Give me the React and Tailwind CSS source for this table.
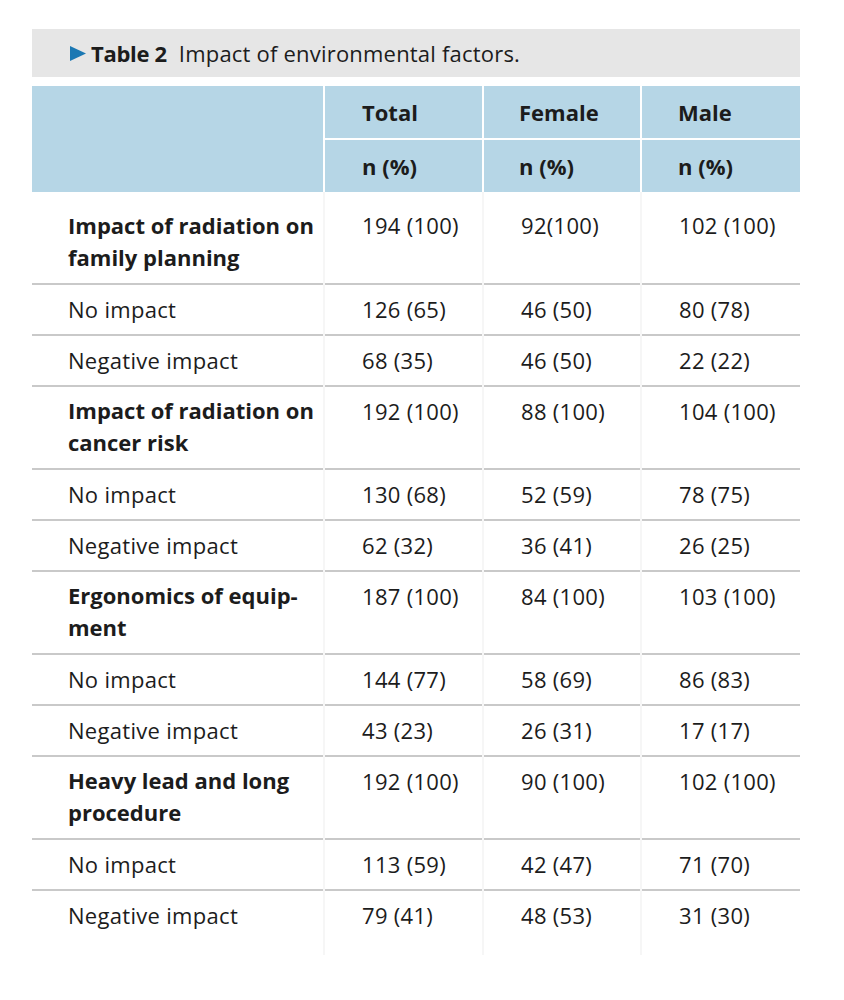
import React from "react";

const groups = [
  {
    title: ["Impact of radiation on", "family planning"],
    vals: ["194 (100)", "92(100)", "102 (100)"],
    rows: [
      ["No impact", "126 (65)", "46 (50)", "80 (78)"],
      ["Negative impact", "68 (35)", "46 (50)", "22 (22)"],
    ],
  },
  {
    title: ["Impact of radiation on", "cancer risk"],
    vals: ["192 (100)", "88 (100)", "104 (100)"],
    rows: [
      ["No impact", "130 (68)", "52 (59)", "78 (75)"],
      ["Negative impact", "62 (32)", "36 (41)", "26 (25)"],
    ],
  },
  {
    title: ["Ergonomics of equip-", "ment"],
    vals: ["187 (100)", "84 (100)", "103 (100)"],
    rows: [
      ["No impact", "144 (77)", "58 (69)", "86 (83)"],
      ["Negative impact", "43 (23)", "26 (31)", "17 (17)"],
    ],
  },
  {
    title: ["Heavy lead and long", "procedure"],
    vals: ["192 (100)", "90 (100)", "102 (100)"],
    rows: [
      ["No impact", "113 (59)", "42 (47)", "71 (70)"],
      ["Negative impact", "79 (41)", "48 (53)", "31 (30)"],
    ],
  },
];

function Cell({ children, bold, first, border, extraTop, lastRow }) {
  const pt = extraTop ? "pt-[17px]" : bold ? "pt-[7px]" : "pt-[8px]";
  const pb = lastRow ? "pb-[24px]" : bold ? "pb-[10px]" : "pb-[9px]";
  return (
    <div
      className={`bg-white ${first ? "pl-[36px]" : "pl-[37px]"} ${pt} ${pb} ${
        border ? "border-b-2 border-[#c9c9c9]" : ""
      } ${bold ? "font-bold tracking-[0px]" : "tracking-[0.3px]"}`}
    >
      {children}
    </div>
  );
}

export default function App() {
  const bodyRows = [];
  groups.forEach((g, gi) => {
    bodyRows.push({ bold: true, cells: [g.title, ...g.vals], first: gi === 0 });
    g.rows.forEach((r, ri) =>
      bodyRows.push({
        bold: false,
        cells: r,
        last: gi === groups.length - 1 && ri === g.rows.length - 1,
      })
    );
  });

  return (
    <div
      className="w-[844px] h-[1000px] bg-white text-[#1c1c1c] pt-[29px] pl-[32px]"
      style={{ fontFamily: '"Open Sans", "Noto Sans", sans-serif' }}
    >
      <div className="w-[768px]">
        <div className="h-[48px] bg-[#e6e6e6] flex items-center pl-[37px] text-[22px]">
          <svg width="18" height="17" viewBox="0 0 18 17" className="mr-[4px] mt-[1px]">
            <path d="M1 1 L17 8.5 L1 16 Z" fill="#1b78b3" />
          </svg>
          <span className="font-bold tracking-[-0.3px]">Table 2</span>
          <span className="ml-[12px] tracking-[0.2px]">Impact of environmental factors.</span>
        </div>
        <div className="mt-[9px] grid grid-cols-[291px_157px_156px_158px] gap-x-[2px] gap-y-[2px] text-[22px] font-bold leading-[32px]">
          <div className="row-span-2 bg-[#b6d6e6]" />
          <div className="bg-[#b6d6e6] h-[52px] flex items-center pl-[37px]">Total</div>
          <div className="bg-[#b6d6e6] h-[52px] flex items-center pl-[35px]">Female</div>
          <div className="bg-[#b6d6e6] h-[52px] flex items-center pl-[36px]">Male</div>
          <div className="bg-[#b6d6e6] h-[52px] flex items-center pl-[37px]">n (%)</div>
          <div className="bg-[#b6d6e6] h-[52px] flex items-center pl-[35px]">n (%)</div>
          <div className="bg-[#b6d6e6] h-[52px] flex items-center pl-[36px]">n (%)</div>
        </div>
        <div className="grid grid-cols-[291px_157px_156px_158px] gap-x-[2px] bg-[#f6f6f6] text-[22px] leading-[32px]">
          {bodyRows.map((row, i) =>
            row.cells.map((c, j) => (
              <Cell
                key={`${i}-${j}`}
                bold={row.bold && j === 0}
                first={j === 0}
                border={!row.last}
                extraTop={row.first}
                lastRow={row.last}
              >
                {Array.isArray(c) ? (
                  <>
                    {c[0]}
                    <br />
                    {c[1]}
                  </>
                ) : (
                  c
                )}
              </Cell>
            ))
          )}
        </div>
      </div>
    </div>
  );
}
